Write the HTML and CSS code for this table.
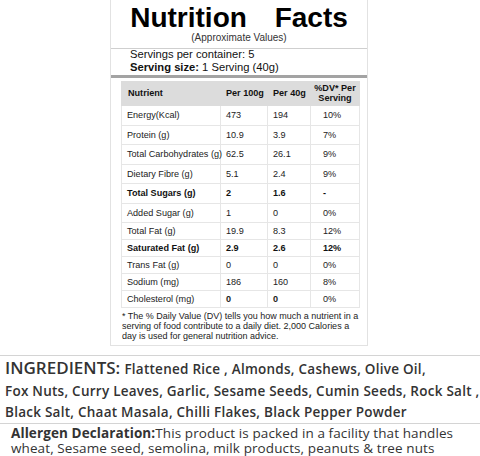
FILE: index.html
```html
<!DOCTYPE html>
<html>
<head>
<meta charset="utf-8">
<link rel="stylesheet" href="styles.css">
</head>
<body>
<div class="page">
  <div class="card">
    <div class="head">
      <div class="title">Nutrition Facts</div>
      <div class="subtitle">(Approximate Values)</div>
    </div>
    <div class="serving">
      <div>Servings per container: 5</div>
      <div><b>Serving size:</b> 1 Serving (40g)</div>
    </div>
    <table class="nt">
      <colgroup><col class="c1"><col class="c2"><col class="c3"><col class="c4"></colgroup>
      <thead>
        <tr><th>Nutrient</th><th>Per 100g</th><th>Per 40g</th><th class="dvh">%DV* Per<br>Serving</th></tr>
      </thead>
      <tbody>
        <tr class="r1"><td>Energy(Kcal)</td><td>473</td><td>194</td><td class="dv">10%</td></tr>
        <tr class="r1"><td>Protein (g)</td><td>10.9</td><td>3.9</td><td class="dv">7%</td></tr>
        <tr class="r1"><td>Total Carbohydrates (g)</td><td>62.5</td><td>26.1</td><td class="dv">9%</td></tr>
        <tr class="r1"><td>Dietary Fibre (g)</td><td>5.1</td><td>2.4</td><td class="dv">9%</td></tr>
        <tr class="r1 bold"><td>Total Sugars (g)</td><td>2</td><td>1.6</td><td class="dv">-</td></tr>
        <tr class="r1"><td>Added Sugar (g)</td><td>1</td><td>0</td><td class="dv">0%</td></tr>
        <tr class="r2"><td>Total Fat (g)</td><td>19.9</td><td>8.3</td><td class="dv">12%</td></tr>
        <tr class="r2 bold"><td>Saturated Fat (g)</td><td>2.9</td><td>2.6</td><td class="dv">12%</td></tr>
        <tr class="r2"><td>Trans Fat (g)</td><td>0</td><td>0</td><td class="dv">0%</td></tr>
        <tr class="r2"><td>Sodium (mg)</td><td>186</td><td>160</td><td class="dv">8%</td></tr>
        <tr class="r2"><td>Cholesterol (mg)</td><td><b>0</b></td><td><b>0</b></td><td class="dv">0%</td></tr>
      </tbody>
    </table>
    <p class="note">* The % Daily Value (DV) tells you how much a nutrient in a<br>serving of food contribute to a daily diet. 2,000 Calories a<br>day is used for general nutrition advice.</p>
  </div>
  <div class="ingredients">
    <div class="ing-line first"><span class="ing-label">INGREDIENTS:</span> <span class="ing-text">Flattened Rice , Almonds, Cashews, Olive Oil,</span></div>
    <div class="ing-line"><span class="ing-text">Fox Nuts, Curry Leaves, Garlic, Sesame Seeds, Cumin Seeds, Rock Salt ,</span></div>
    <div class="ing-line"><span class="ing-text">Black Salt, Chaat Masala, Chilli Flakes, Black Pepper Powder</span></div>
  </div>
  <div class="allergen">
    <div><b>Allergen Declaration:</b>This product is packed in a facility that handles</div>
    <div>wheat, Sesame seed, semolina, milk products, peanuts &amp; tree nuts</div>
  </div>
</div>
</body>
</html>
```

FILE: styles.css
```css
html, body {
  margin: 0;
  padding: 0;
  background: #fff;
}
.page {
  width: 480px;
  height: 456px;
  overflow: hidden;
}
.card {
  margin-left: 110px;
  width: 256px;
  border: 1px solid #e2e2e2;
  border-top: none;
  font-family: "Liberation Sans", Arial, sans-serif;
  color: #111;
}
.head {
  border-bottom: 1px solid #cfcfcf;
  padding: 4px 0 5px;
  text-align: center;
}
.title {
  font-size: 28px;
  font-weight: bold;
  line-height: 28px;
  word-spacing: 20px;
  color: #000;
}
.subtitle {
  font-size: 10px;
  line-height: 11px;
  color: #333;
}
.serving {
  padding: 0 0 1px 19px;
  margin-top: -1px;
  font-size: 11.2px;
  line-height: 13px;
  border-bottom: 3px solid #a3a3a3;
  color: #111;
}
.nt {
  margin: 3px 0 0 10px;
  width: 238px;
  border-collapse: collapse;
  table-layout: fixed;
  font-size: 9.1px;
  color: #222;
}
.c1 { width: 99px; }
.c2 { width: 47px; }
.c3 { width: 43px; }
.c4 { width: 49px; }
.nt th {
  background: #dcdcdc;
  height: 23px;
  padding: 0 0 0 5px;
  text-align: left;
  font-weight: bold;
  line-height: 9.5px;
  border: 1px solid #dcdcdc;
  color: #111;
}
.nt th:first-child { padding-left: 6px; }
.nt th.dvh { text-align: center; padding-left: 0; }
.nt td {
  padding: 0 0 0 5px;
  border: 1px solid #e6e6e6;
  line-height: 10px;
  white-space: nowrap;
}
.nt td:first-child { padding-left: 5px; }
.nt td.dv { padding-left: 12px; }
.nt tr.r1 td { height: 18.5px; }
.nt tr.r2 td { height: 16px; }
.nt tr.bold td { font-weight: bold; color: #111; }
.note {
  margin: 3px 0 0 11px;
  padding-bottom: 4px;
  font-size: 9px;
  line-height: 10px;
  color: #222;
}
.ingredients {
  margin-top: 9px;
  border-top: 1px solid #d4d4d4;
  border-bottom: 1px solid #d4d4d4;
  padding: 0 0 1px 5px;
  font-family: "Open Sans", sans-serif;
  color: #333;
}
.ing-line {
  height: 21px;
  line-height: 21px;
  white-space: nowrap;
}
.ing-line.first {
  height: 24px;
  line-height: 23px;
}
.ing-label {
  font-size: 17px;
  font-weight: 600;
  letter-spacing: 0;
  line-height: 23px;
}
.ing-text {
  font-size: 13.5px;
  font-weight: 600;
  letter-spacing: 0.25px;
  line-height: 13px;
}
.allergen {
  padding: 2px 0 0 11px;
  font-family: "Open Sans", sans-serif;
  font-size: 13.5px;
  letter-spacing: 0.1px;
  line-height: 15px;
  color: #333;
  white-space: nowrap;
}
.allergen b { font-weight: 700; }
```
